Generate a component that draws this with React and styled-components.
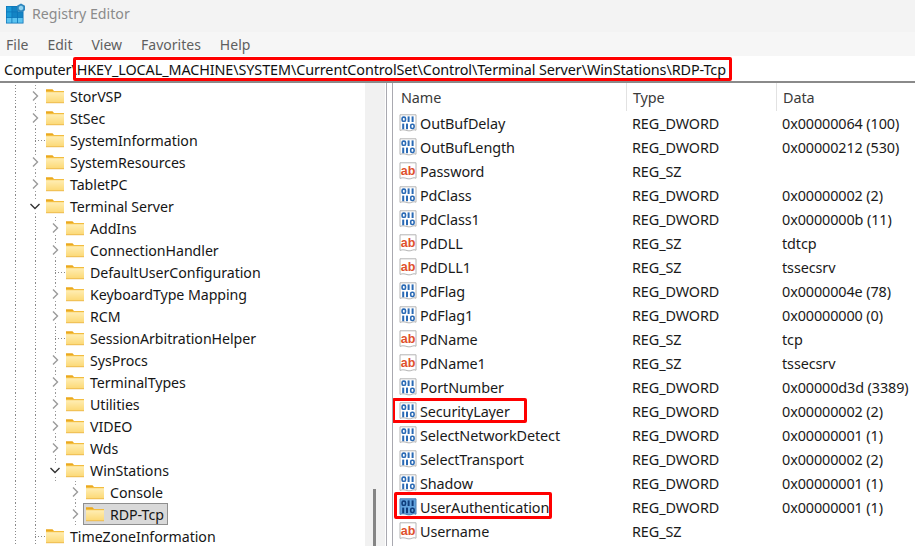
import React from "react";
import styled, { createGlobalStyle } from "styled-components";

const Global = createGlobalStyle`
  html, body { margin: 0; padding: 0; background: #fff; overflow: hidden; }
  * { box-sizing: border-box; }
`;
const Window = styled.div`
  width: 915px; height: 546px; overflow: hidden; display: flex; flex-direction: column;
  font-family: "Noto Sans", "Liberation Sans", sans-serif; color: #1a1a1a; background: #fff;
  font-size: 14.4px;
`;
const TitleBar = styled.div`
  height: 32px; background: #f3f3f3; display: flex; align-items: center; gap: 6px; padding: 0 0 5px 5px;
  color: #8b8b8b; font-size: 14.2px; flex: none;
`;
const MenuBar = styled.div`
  height: 24px; background: #f6f6f6; display: flex; align-items: center; gap: 19px; padding-left: 6px;
  color: #5f5f5f; flex: none; font-size: 14px;
`;
const AddressBar = styled.div`
  height: 27px; flex: none; display: flex; align-items: center; padding: 1px 0 0 4px; background: #fff;
  border-bottom: 2px solid #8a8a8a; color: #111; white-space: nowrap; letter-spacing: -0.1px;
`;
const Highlight = styled.span`
  height: 24px; display: flex; align-items: center; padding: 0 3px 0 1px; margin-left: -4px;
  border: 3px solid #f00; border-radius: 2px;
`;
const Body = styled.div`
  flex: 1; display: flex; min-height: 0;
`;
const TreePane = styled.div`
  width: 386px; flex: none; position: relative; overflow: hidden; padding: 2px 0 0 5px; font-size: 14.2px;
  letter-spacing: -0.05px;
`;
const TreeRow = styled.div`
  height: 22px; display: flex; align-items: center; white-space: nowrap;
`;
const Guide = styled.span`
  width: 20px; height: 22px; flex: none; display: block;
  background: ${p => p.$on ? "repeating-linear-gradient(to bottom, #8a8a8a 0 1px, transparent 1px 3px) 10px 0 / 1px 100% no-repeat" : "none"};
`;
const Twisty = styled.span`
  width: 20px; height: 22px; flex: none; display: flex; align-items: center; justify-content: center; position: relative;
  background: repeating-linear-gradient(to bottom, #9a9a9a 0 1px, transparent 1px 3px) 10px 0 / 1px 100% no-repeat;
  svg { background: #fff; display: block; }
`;
const Leaf = styled.span`
  width: 20px; height: 22px; flex: none; display: block;
  background:
    repeating-linear-gradient(to bottom, #8a8a8a 0 1px, transparent 1px 3px) 10px 0 / 1px 100% no-repeat,
    repeating-linear-gradient(to right, #8a8a8a 0 1px, transparent 1px 3px) 10px 11px / 10px 1px no-repeat;
`;
const FolderSlot = styled.span`
  margin-left: 1px; width: 18px; height: 16px; flex: none; display: block;
  svg { display: block; }
`;
const NodeLabel = styled.span`
  margin-left: 6px; color: #161616;
`;
const SelectedNode = styled.span`
  display: flex; align-items: center; height: 22px; margin-left: -2px; padding: 0 4px 0 2px;
  background: #d9d9d9; outline: 1px solid #8f8f8f; outline-offset: -1px;
`;
const ScrollTrack = styled.div`
  position: absolute; left: 365px; top: 0; bottom: 0; width: 20px; background: #f1f1f1;
`;
const ScrollThumb = styled.div`
  position: absolute; left: 8px; top: 406px; bottom: 0; width: 3px; background: #858585;
`;
const Splitter = styled.div`
  width: 7px; flex: none; border-left: 1px solid #a9a9b0; border-right: 1px solid #a9a9b0; background: #fff;
`;
const ListPane = styled.div`
  flex: 1; min-width: 0; overflow: hidden; padding-left: 2px; letter-spacing: -0.1px;
`;
const HeaderRow = styled.div`
  height: 28px; display: grid; grid-template-columns: 231px 150px 1fr; align-items: center; color: #3a3a3a;
`;
const HeaderCell = styled.div`
  height: 100%; display: flex; align-items: center; padding-left: 6px;
  & + & { border-left: 1px solid #e2e2e2; }
`;
const ListRow = styled.div`
  height: 24px; display: grid; grid-template-columns: 231px 150px 1fr; align-items: center; white-space: nowrap; color: #1a1a1a;
`;
const NameCell = styled.div`
  display: flex; align-items: center; gap: 3px; padding-left: 4px; height: 24px; position: relative;
  svg { flex: none; display: block; }
`;
const RedFrame = styled.div`
  position: absolute; top: ${p => p.$top}px; left: ${p => p.$left}px; width: ${p => p.$w}px; height: ${p => p.$h}px;
  border: 3px solid #f00; border-radius: 2px; pointer-events: none;
`;
const Cell = styled.div`
  padding-left: 6px;
`;

const AppIcon = () => (
  <svg width="21" height="21" viewBox="0 0 21 21">
    <rect x="1" y="3" width="17.5" height="17.5" fill="#0d74b8" />
    {[0, 1, 2].map(r => [0, 1, 2].map(c => (
      <rect key={`${r}-${c}`} x={1.7 + c * 5.6} y={3.7 + r * 5.6} width="4.8" height="4.8"
        fill={r === 2 ? "#5cc3f0" : c === 0 ? "#1d9ad6" : c === 2 && r === 0 ? "#7fb8d8" : "#1484c4"} />
    )))}
    <path d="M16 0.4l4 2.3v4.5l-4 2.3-4-2.3V2.7z" fill="#2f86bd" />
    <path d="M16 2.4l2.2 1.3v2.5L16 7.5l-2.2-1.3V3.7z" fill="#8fd2f0" />
  </svg>
);

const Folder = () => (
  <svg width="18" height="16" viewBox="0 0 18 16">
    <defs>
      <linearGradient id="fg" x1="0" y1="0" x2="0" y2="1">
        <stop offset="0" stopColor="#fff0bb" />
        <stop offset="1" stopColor="#fcd873" />
      </linearGradient>
    </defs>
    <path d="M0 1.2h6.5l1.5 1.8H0z" fill="#eba91e" />
    <rect x="0" y="3" width="18" height="12" fill="url(#fg)" />
    <rect x="0" y="3" width="18" height="1.2" fill="#f3bd3f" />
    <rect x="0" y="14.4" width="18" height="0.8" fill="#eab445" />
  </svg>
);

const ChevronRight = () => (
  <svg width="10" height="12" viewBox="0 0 10 12"><path d="M3 1.5L7.5 6 3 10.5" fill="none" stroke="#9a9a9a" strokeWidth="1.4" /></svg>
);
const ChevronDown = () => (
  <svg width="12" height="10" viewBox="0 0 12 10"><path d="M1.5 3L6 7.5 10.5 3" fill="none" stroke="#333" strokeWidth="1.4" /></svg>
);

const Page = ({ active }) => (
  <path d="M1 .8h16v15.4c-2.6-1.6-5 1.4-8 .6s-5-1.6-8-.4z" fill={active ? "#62a3de" : "#fff"} stroke={active ? "#4a7fb5" : "#b4b4b4"} strokeWidth="1" />
);
const Bits = ({ active }) => {
  const c = active ? "#0f3d7c" : "#2a6ab5";
  const digit = (x, y, one) => one
    ? <rect key={`${x}${y}`} x={x + 0.6} y={y} width="2" height="5.6" fill={c} />
    : <rect key={`${x}${y}`} x={x + 0.7} y={y + 0.7} width="3.4" height="4.2" rx="1.4" fill="none" stroke={c} strokeWidth="1.6" />;
  return <>
    {digit(2.4, 2.4, false)}{digit(8, 2.4, true)}{digit(12, 2.4, true)}
    {digit(2.6, 9.6, true)}{digit(6.4, 9.6, true)}{digit(11, 9.6, false)}
  </>;
};
const DwordIcon = ({ active }) => (
  <svg width="18" height="18" viewBox="0 0 18 18"><Page active={active} /><Bits active={active} /></svg>
);
const StringIcon = () => (
  <svg width="18" height="18" viewBox="0 0 18 18">
    <Page />
    <text x="9" y="12.5" textAnchor="middle" fontFamily="'Liberation Sans', sans-serif" fontWeight="700" fontSize="12.5" letterSpacing="0" fill="#e0512c">ab</text>
  </svg>
);
const BlankIcon = () => (
  <svg width="18" height="18" viewBox="0 0 18 18"><Page /></svg>
);

const tree = [
  { n: "StorVSP", g: [1], k: "r" },
  { n: "StSec", g: [1], k: "r" },
  { n: "SystemInformation", g: [1], k: "l" },
  { n: "SystemResources", g: [1], k: "r" },
  { n: "TabletPC", g: [1], k: "r" },
  { n: "Terminal Server", g: [1], k: "d" },
  { n: "AddIns", g: [1, 1], k: "r" },
  { n: "ConnectionHandler", g: [1, 1], k: "r" },
  { n: "DefaultUserConfiguration", g: [1, 1], k: "l" },
  { n: "KeyboardType Mapping", g: [1, 1], k: "r" },
  { n: "RCM", g: [1, 1], k: "r" },
  { n: "SessionArbitrationHelper", g: [1, 1], k: "l" },
  { n: "SysProcs", g: [1, 1], k: "r" },
  { n: "TerminalTypes", g: [1, 1], k: "r" },
  { n: "Utilities", g: [1, 1], k: "r" },
  { n: "VIDEO", g: [1, 1], k: "r" },
  { n: "Wds", g: [1, 1], k: "r" },
  { n: "WinStations", g: [1, 1], k: "d" },
  { n: "Console", g: [1, 1, 0], k: "r" },
  { n: "RDP-Tcp", g: [1, 1, 0], k: "r", sel: true },
  { n: "TimeZoneInformation", g: [1], k: "l" },
];

const rows = [
  ["OutBufDelay", "REG_DWORD", "0x00000064 (100)"],
  ["OutBufLength", "REG_DWORD", "0x00000212 (530)"],
  ["Password", "REG_SZ", ""],
  ["PdClass", "REG_DWORD", "0x00000002 (2)"],
  ["PdClass1", "REG_DWORD", "0x0000000b (11)"],
  ["PdDLL", "REG_SZ", "tdtcp"],
  ["PdDLL1", "REG_SZ", "tssecsrv"],
  ["PdFlag", "REG_DWORD", "0x0000004e (78)"],
  ["PdFlag1", "REG_DWORD", "0x00000000 (0)"],
  ["PdName", "REG_SZ", "tcp"],
  ["PdName1", "REG_SZ", "tssecsrv"],
  ["PortNumber", "REG_DWORD", "0x00000d3d (3389)"],
  ["SecurityLayer", "REG_DWORD", "0x00000002 (2)", { left: -3, w: 135, h: 25, top: -1 }],
  ["SelectNetworkDetect", "REG_DWORD", "0x00000001 (1)"],
  ["SelectTransport", "REG_DWORD", "0x00000002 (2)"],
  ["Shadow", "REG_DWORD", "0x00000001 (1)"],
  ["UserAuthentication", "REG_DWORD", "0x00000001 (1)", { left: -1, w: 158, h: 27, top: -3 }, true],
  ["Username", "REG_SZ", ""],
];

export default function App() {
  return (
    <Window>
      <Global />
      <TitleBar><AppIcon />Registry Editor</TitleBar>
      <MenuBar><span>File</span><span>Edit</span><span>View</span><span>Favorites</span><span>Help</span></MenuBar>
      <AddressBar>Computer\<Highlight>HKEY_LOCAL_MACHINE\SYSTEM\CurrentControlSet\Control\Terminal Server\WinStations\RDP-Tcp</Highlight></AddressBar>
      <Body>
        <TreePane>
          {tree.map(t => {
            const content = <><FolderSlot><Folder /></FolderSlot><NodeLabel>{t.n}</NodeLabel></>;
            return (
              <TreeRow key={t.n}>
                {t.g.map((on, i) => <Guide key={i} $on={!!on} />)}
                {t.k === "l" ? <Leaf /> : <Twisty>{t.k === "r" ? <ChevronRight /> : <ChevronDown />}</Twisty>}
                {t.sel ? <SelectedNode>{content}</SelectedNode> : content}
              </TreeRow>
            );
          })}
          <ScrollTrack><ScrollThumb /></ScrollTrack>
        </TreePane>
        <Splitter />
        <ListPane>
          <HeaderRow><HeaderCell>Name</HeaderCell><HeaderCell>Type</HeaderCell><HeaderCell>Data</HeaderCell></HeaderRow>
          {rows.map(([n, t, d, frame, active]) => (
            <ListRow key={n}>
              <NameCell>
                {t === "REG_SZ" ? <StringIcon /> : <DwordIcon active={active} />}
                {n}
                {frame && <RedFrame $left={frame.left} $top={frame.top} $w={frame.w} $h={frame.h} />}
              </NameCell>
              <Cell>{t}</Cell>
              <Cell>{d}</Cell>
            </ListRow>
          ))}
          <ListRow><NameCell><BlankIcon /></NameCell></ListRow>
        </ListPane>
      </Body>
    </Window>
  );
}
